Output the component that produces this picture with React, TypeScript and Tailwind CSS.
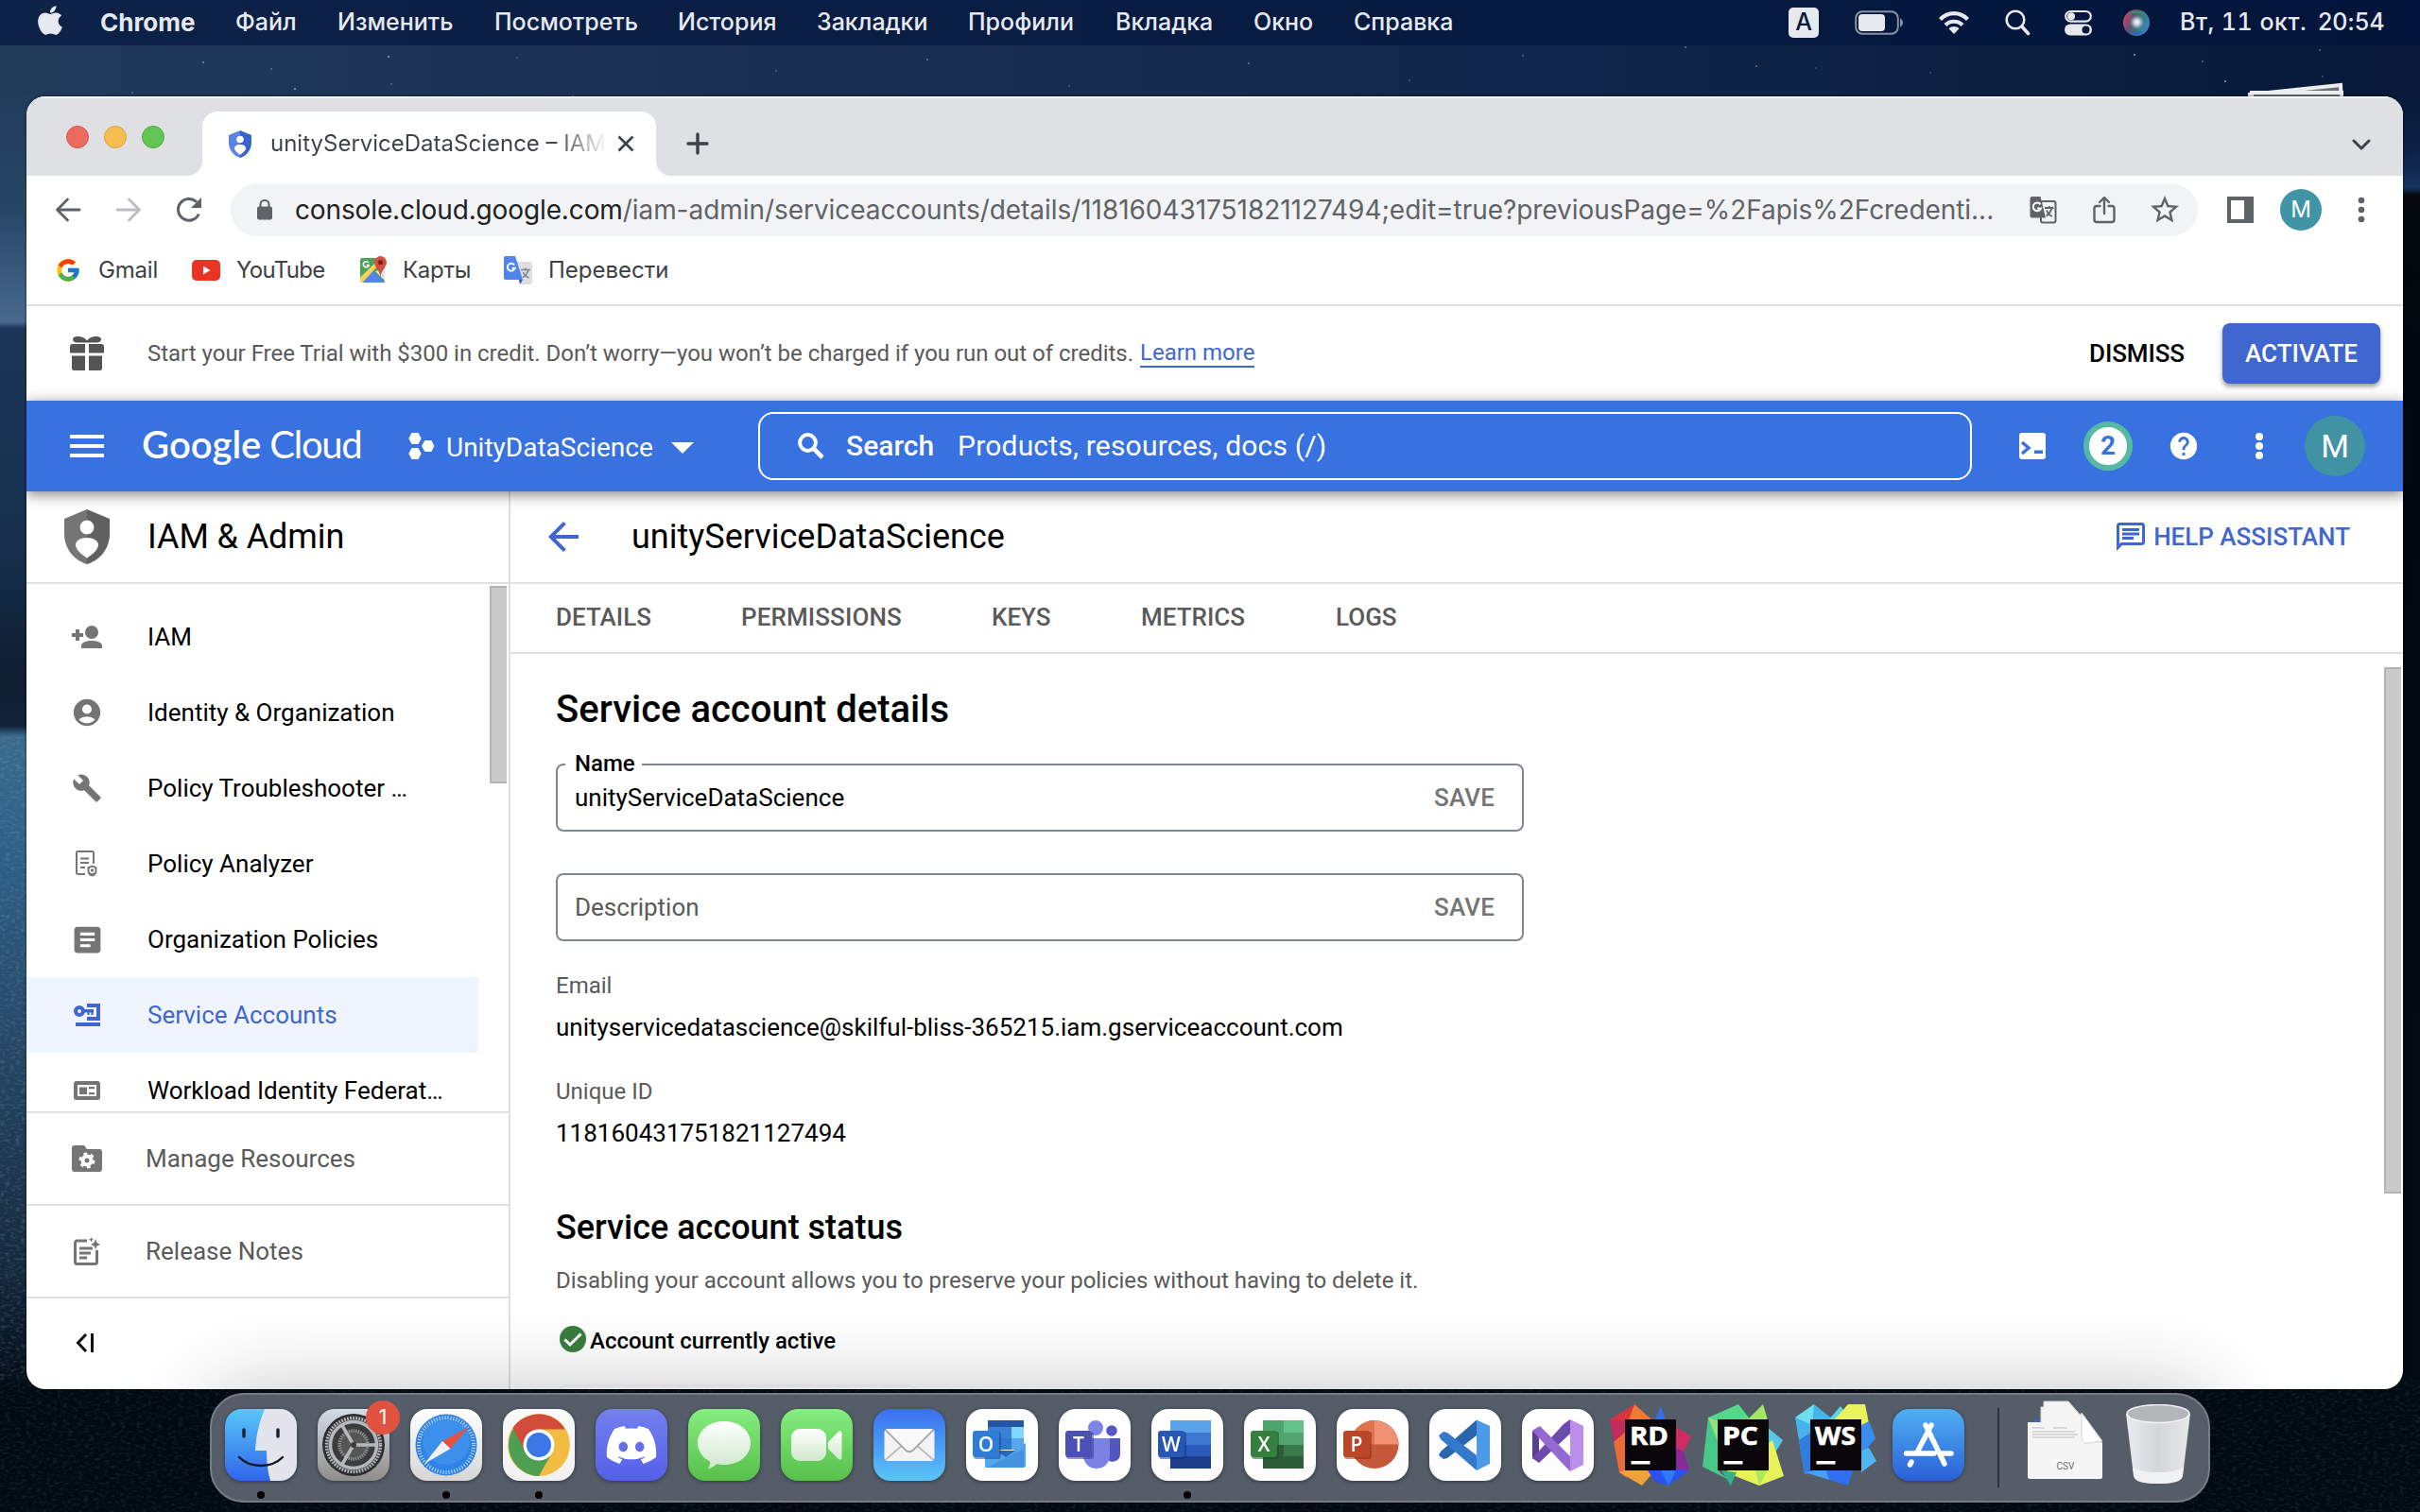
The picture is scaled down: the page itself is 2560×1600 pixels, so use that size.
import type { ReactNode } from "react";
import { FaApple, FaDiscord } from "react-icons/fa";
import { FcGoogle } from "react-icons/fc";
import {
  MdAccountCircle,
  MdArrowBack,
  MdArticle,
  MdBuild,
  MdHelp,
  MdOutlineChat,
  MdStarBorder,
} from "react-icons/md";

/* ---------- desktop ---------- */

const STARS: [number, number, number][] = [
  [214, 65, 0.5], [286, 72, 0.35], [311, 93, 0.6], [410, 59, 0.6], [413, 88, 0.3], [546, 60, 0.25],
  [139, 97, 0.3], [605, 101, 0.4], [1782, 49, 0.4], [1857, 69, 0.4], [1920, 71, 0.2], [2041, 76, 0.2],
  [2257, 57, 0.6], [2329, 64, 0.4], [2353, 85, 0.6], [2453, 52, 0.4], [2456, 80, 0.3], [820, 74, 0.3],
  [980, 62, 0.4], [1130, 90, 0.3], [1320, 66, 0.4], [1490, 84, 0.3], [1610, 58, 0.35],
];

function Wallpaper() {
  return (
    <svg className="absolute inset-0" width="2560" height="1600" viewBox="0 0 2560 1600" aria-hidden>
      <defs>
        <linearGradient id="sky" x1="0" x2="1" y1="0" y2="0">
          <stop offset="0" stopColor="#213b5b" />
          <stop offset="0.3" stopColor="#1b2f52" />
          <stop offset="0.65" stopColor="#11264a" />
          <stop offset="1" stopColor="#071838" />
        </linearGradient>
        <linearGradient id="west" x1="0" x2="0" y1="0" y2="1600" gradientUnits="userSpaceOnUse">
          <stop offset="0" stopColor="#213b5b" />
          <stop offset="0.06" stopColor="#213b5b" />
          <stop offset="0.14" stopColor="#274767" />
          <stop offset="0.213" stopColor="#47698f" />
          <stop offset="0.217" stopColor="#1b3658" />
          <stop offset="0.36" stopColor="#16304e" />
          <stop offset="0.45" stopColor="#0f1d30" />
          <stop offset="0.48" stopColor="#11243a" />
          <stop offset="0.487" stopColor="#3a6b8c" />
          <stop offset="0.56" stopColor="#2f6088" />
          <stop offset="0.68" stopColor="#264a69" />
          <stop offset="0.84" stopColor="#15283c" />
          <stop offset="0.92" stopColor="#020b14" />
          <stop offset="1" stopColor="#020b14" />
        </linearGradient>
        <linearGradient id="east" x1="0" x2="0" y1="0" y2="1600" gradientUnits="userSpaceOnUse">
          <stop offset="0" stopColor="#071838" />
          <stop offset="0.06" stopColor="#071838" />
          <stop offset="0.1" stopColor="#0b2147" />
          <stop offset="0.124" stopColor="#15335c" />
          <stop offset="0.129" stopColor="#05090f" />
          <stop offset="0.24" stopColor="#020812" />
          <stop offset="0.9" stopColor="#020b14" />
          <stop offset="1" stopColor="#020b14" />
        </linearGradient>
        <filter id="grain" x="0" y="0" width="1" height="1">
          <feTurbulence type="fractalNoise" baseFrequency="0.18 0.35" numOctaves="3" seed="4" />
          <feColorMatrix values="0 0 0 0 0.2  0 0 0 0 0.38  0 0 0 0 0.5  0 0 0 1.6 -0.75" />
        </filter>
      </defs>
      <rect width="2560" height="1600" fill="#020b14" />
      <rect width="2560" height="160" fill="url(#sky)" />
      <rect y="100" width="60" height="1500" fill="url(#west)" />
      <rect x="2520" y="100" width="40" height="1500" fill="url(#east)" />
      <rect y="780" width="50" height="680" filter="url(#grain)" opacity="0.45" />
      <rect y="1460" width="2560" height="140" filter="url(#grain)" opacity="0.22" />
      {STARS.map(([x, y, o]) => (
        <rect key={`${x}-${y}`} x={x} y={y} width="2" height="2" fill="#a9c4dd" opacity={o} />
      ))}
      <g fill="#6d7076" stroke="#eceef0" strokeWidth="4">
        <path d="M2380 100 L2476 90 L2478 130 L2380 130Z" />
        <path d="M2382 98 L2477 98 L2477 130 L2382 130Z" />
      </g>
    </svg>
  );
}

/* ---------- menu bar ---------- */

function MenuBar() {
  return (
    <header className="relative flex h-12 items-center bg-[#00123a]/60 pb-[1px] text-[25px] font-medium whitespace-nowrap text-[#e6eaf0]">
      <span className="ml-[38px] w-[68px]">
        <FaApple size={33} className="-mt-1 h-[35px] w-[30px]" />
      </span>
      <span className="w-[143px] text-[26px] font-bold">Chrome</span>
      <span className="w-[108px]">Файл</span>
      <span className="w-[166px]">Изменить</span>
      <span className="w-[194px]">Посмотреть</span>
      <span className="w-[147px]">История</span>
      <span className="w-[160px]">Закладки</span>
      <span className="w-[156px]">Профили</span>
      <span className="w-[146px]">Вкладка</span>
      <span className="w-[106px]">Окно</span>
      <span className="w-[460px]">Справка</span>
      <span className="mr-[38px] flex h-8 w-8 items-center justify-center rounded-[5px] bg-[#e6e9ee] text-[25px] text-[#0a1a3c]">A</span>
      <svg className="mr-[36px]" width="52" height="26" viewBox="0 0 52 26">
        <rect x="1.2" y="1.2" width="44.6" height="23.6" rx="7" fill="none" stroke="#8893a8" strokeWidth="2" />
        <rect x="4" y="4" width="28" height="18" rx="4" fill="#e6e9ee" />
        <path d="M48 8.500c4 1.500 4 7.500 0 9z" fill="#8893a8" />
      </svg>
      <svg className="mr-[37px]" width="34" height="26" viewBox="0 0 34 26" fill="none" stroke="#e6e9ee" strokeWidth="4.200">
        <path d="M2.500 9.500C10.500 1 23.500 1 31.500 9.500" />
        <path d="M8 15.500c5-5 13-5 18 0" />
        <path d="M17 25l-5.500-5.700c3-3 8-3 11 0z" fill="#e6e9ee" stroke="none" />
      </svg>
      <svg className="mr-[36px]" width="27" height="28" viewBox="0 0 27 28" fill="none" stroke="#e6e9ee" strokeLinecap="round">
        <circle cx="11" cy="11" r="9.300" strokeWidth="2.600" />
        <path d="M17.800 18l6.700 7.500" strokeWidth="3.600" />
      </svg>
      <svg className="mr-[33px]" width="29" height="28" viewBox="0 0 29 28">
        <rect x="1.200" y="2" width="26.600" height="10.600" rx="5.300" fill="none" stroke="#e6e9ee" strokeWidth="2.200" />
        <circle cx="7" cy="7.300" r="4" fill="#e6e9ee" />
        <rect y="15.500" width="29" height="12" rx="6" fill="#e6e9ee" />
        <circle cx="22.500" cy="21.500" r="4" fill="#0a1a3c" />
      </svg>
      <svg className="mr-[32px]" width="28" height="28" viewBox="0 0 28 28">
        <defs>
          <linearGradient id="siri" x1="0" x2="1" y1="0.300" y2="0.700">
            <stop offset="0" stopColor="#c8446c" />
            <stop offset="0.350" stopColor="#5b5470" />
            <stop offset="0.650" stopColor="#347f86" />
            <stop offset="1" stopColor="#3f7fd0" />
          </linearGradient>
          <radialGradient id="siriGlow">
            <stop offset="0" stopColor="#fff" />
            <stop offset="0.400" stopColor="#e9e6f5" stopOpacity="0.800" />
            <stop offset="1" stopColor="#8ab" stopOpacity="0" />
          </radialGradient>
        </defs>
        <circle cx="14" cy="14" r="14" fill="url(#siri)" />
        <path d="M5 5c6-5 14-4 18 1-5-2-12-2-18-1z" fill="#2f9a6a" opacity="0.800" />
        <path d="M6 23c5 5 12 4 16 0-5 1-11 1-16 0z" fill="#2f62c0" opacity="0.900" />
        <circle cx="14.500" cy="13.500" r="8" fill="url(#siriGlow)" />
      </svg>
      <span className="w-[146px] tracking-[0.500px] tabular-nums">Вт, 11 окт.</span>
      <span className="tracking-[-0.100px]">20:54</span>
    </header>
  );
}

/* ---------- browser chrome ---------- */

function Shield({ className, a, b }: { className: string; a: string; b: string }) {
  return (
    <svg className={className} viewBox="0 0 48 58">
      <path d="M24 0L0 10v16c0 15 10 28 24 32z" fill={a} />
      <path d="M24 0l24 10v16c0 15-10 28-24 32z" fill={b} />
      <circle cx="24" cy="19" r="7.500" fill="#fff" />
      <path d="M24 30c6.500 0 12 3 12 7.500 0 5-6 10-12 14-6-4-12-9-12-14C12 33 17.500 30 24 30z" fill="#fff" />
    </svg>
  );
}

function TabStrip() {
  return (
    <div className="flex h-[84px] shrink-0 items-end bg-[#dee0e4] shadow-[inset_0_2px_0_#f4f5f6]">
      <div className="mb-[29px] ml-[42px] flex gap-4">
        <i className="size-6 rounded-full border border-[#d3564b] bg-[#ed6a5e]" />
        <i className="size-6 rounded-full border border-[#d9a33c] bg-[#f5be4e]" />
        <i className="size-6 rounded-full border border-[#52a840] bg-[#61c654]" />
      </div>
      <svg className="ml-6" width="16" height="16" viewBox="0 0 16 16">
        <path d="M16 0v16H0C9 16 16 9 16 0z" fill="#fff" />
      </svg>
      <div className="flex h-[68px] w-[480px] items-center rounded-t-2xl bg-white pl-7">
        <Shield className="h-[29px] w-6" a="#5a84e0" b="#3a64cc" />
        <span className="ml-5 w-[356px] overflow-hidden bg-linear-to-r from-[#3d4145] from-85% to-transparent to-[100%] bg-clip-text text-2xl whitespace-nowrap text-transparent">
          unityServiceDataScience – IAM
        </span>
        <svg className="ml-[11px]" width="18" height="18" viewBox="0 0 18 18" stroke="#3d4145" strokeWidth="2.600">
          <path d="M1.500 1.500l15 15M16.500 1.500l-15 15" />
        </svg>
      </div>
      <svg width="16" height="16" viewBox="0 0 16 16">
        <path d="M0 0v16h16C7 16 0 9 0 0z" fill="#fff" />
      </svg>
      <svg className="mb-[22px] ml-4" width="24" height="24" viewBox="0 0 24 24" stroke="#3d4145" strokeWidth="3.400" strokeLinecap="round">
        <path d="M12 2v20M2 12h20" />
      </svg>
      <svg className="mr-[34px] mb-[26px] ml-auto" width="20" height="14" viewBox="0 0 20 14" fill="none" stroke="#3d4145" strokeWidth="3" strokeLinecap="round" strokeLinejoin="round">
        <path d="M2 3l8 8 8-8" />
      </svg>
    </div>
  );
}

function Toolbar() {
  return (
    <div className="flex h-[72px] shrink-0 items-center text-[#5f6368]">
      <svg className="ml-[30px]" width="28" height="28" viewBox="0 0 28 28" fill="none" stroke="#5f6368" strokeWidth="2.800" strokeLinecap="round" strokeLinejoin="round">
        <path d="M26 14H3M13.500 3L2.500 14l11 11" />
      </svg>
      <svg className="ml-9" width="28" height="28" viewBox="0 0 28 28" fill="none" stroke="#bcbec1" strokeWidth="2.800" strokeLinecap="round" strokeLinejoin="round">
        <path d="M2 14h23M14.500 3l11 11-11 11" />
      </svg>
      <svg className="ml-9" width="28" height="28" viewBox="0 0 28 28">
        <path d="M24.300 18.500A11.400 11.400 0 1 1 22 5.800" fill="none" stroke="#5f6368" strokeWidth="3" />
        <path d="M27 1v11H16z" fill="#5f6368" />
      </svg>
      <div className="ml-[30px] flex h-14 w-[2081px] items-center rounded-full bg-[#f1f3f4]">
        <svg className="ml-7" width="16" height="22" viewBox="0 0 16 22">
          <path d="M3.500 8V5.500a4.500 4.500 0 0 1 9 0V8" fill="none" stroke="#5f6368" strokeWidth="2.200" />
          <rect y="7.500" width="16" height="14" rx="2" fill="#5f6368" />
        </svg>
        <span className="ml-6 w-[1823px] text-[28px] tracking-[-0.050px] whitespace-nowrap text-[#5f6368]">
          <span className="tracking-[-0.130px] text-[#202124]">console.cloud.google.com</span>
          /iam-admin/serviceaccounts/details/118160431751821127494;edit=true?previousPage=%2Fapis%2Fcredenti...
        </span>
        <svg className="ml-3" width="30" height="30" viewBox="0 0 30 30">
          <rect x="12" y="6" width="15.500" height="22.500" rx="2" fill="none" stroke="#5f6368" strokeWidth="2" />
          <path d="M2.500 1H11.500l5.500 22.500H2.500A2 2 0 0 1 .5 21.500V3a2 2 0 0 1 2-2z" fill="#5f6368" />
          <path d="M11.500 9.300A4.300 4.300 0 1 0 12 13.500H8" fill="none" stroke="#fff" strokeWidth="2" />
          <path d="M16 13h9.500M20.800 11v2M23.500 13c-1 4-3.500 7-6 8.500M18 15.500c1 3 3.500 5.500 6 6.500" fill="none" stroke="#5f6368" strokeWidth="1.800" />
        </svg>
        <svg className="ml-[37px]" width="24" height="30" viewBox="0 0 24 30" fill="none" stroke="#5f6368" strokeWidth="2.400" strokeLinecap="round" strokeLinejoin="round">
          <path d="M7.500 11H4a2.500 2.500 0 0 0-2.500 2.500v12A2.500 2.500 0 0 0 4 28h16a2.500 2.500 0 0 0 2.500-2.500v-12A2.500 2.500 0 0 0 20 11h-3.500M12 19V2.500M7 7l5-5 5 5" />
        </svg>
        <MdStarBorder className="ml-[34px]" size={36} />
      </div>
      <svg className="ml-[31px]" width="28" height="28" viewBox="0 0 28 28">
        <rect width="28" height="28" fill="#5f6368" />
        <rect x="4" y="4" width="14" height="20" fill="#fff" />
      </svg>
      <span className="ml-7 flex size-11 items-center justify-center rounded-full bg-[#4194a3] text-2xl text-white">M</span>
      <svg className="ml-[38px]" width="8" height="28" viewBox="0 0 8 28" fill="#5f6368">
        <circle cx="4" cy="4" r="3.300" />
        <circle cx="4" cy="14" r="3.300" />
        <circle cx="4" cy="24" r="3.300" />
      </svg>
    </div>
  );
}

function Bookmarks() {
  return (
    <div className="flex h-[66px] shrink-0 items-center border-b-2 border-[#dfe0e1] pb-[9px] text-2xl tracking-[-0.200px] whitespace-nowrap text-[#3d4145]">
      <FcGoogle className="ml-[30px]" size={28} />
      <span className="ml-[18px] w-[99px]">Gmail</span>
      <svg width="30" height="22" viewBox="0 0 30 22">
        <rect width="30" height="22" rx="5" fill="#e93323" />
        <path d="M12 6.500v9l7.500-4.500z" fill="#fff" />
      </svg>
      <span className="ml-[17px] w-[131px] tracking-[-0.700px]">YouTube</span>
      <svg width="30" height="30" viewBox="0 0 30 30">
        <rect y="2" width="26" height="26" rx="2.500" fill="#4ba35a" />
        <path d="M0 28L13 15l13 13z" fill="#4f86ec" />
        <path d="M0 22.500L17 6l3 3L2.500 28H0z" fill="#f6d35b" />
        <path d="M16 16l10 10V13z" fill="#dfe3e8" />
        <path d="M21.500 0a6.500 6.500 0 0 1 6.500 6.500c0 5-5 7-6.500 15.500C20 13.500 15 11.500 15 6.500A6.500 6.500 0 0 1 21.500 0z" fill="#d2503f" />
        <circle cx="21.500" cy="6.800" r="2.500" fill="#7a2018" />
        <path d="M8.800 7A3 3 0 1 0 9.200 9.600H6.800" fill="none" stroke="#fff" strokeWidth="1.600" />
      </svg>
      <span className="ml-[15px] w-[107px] tracking-[-0.300px]">Карты</span>
      <svg width="30" height="30" viewBox="0 0 30 30">
        <path d="M12 6h16a2 2 0 0 1 2 2v20a2 2 0 0 1-2 2H18z" fill="#dcdee1" />
        <path d="M2 0h10l8 25H2a2 2 0 0 1-2-2V2a2 2 0 0 1 2-2z" fill="#4f84ee" />
        <path d="M16 25h4l-3 5z" fill="#3a4fc0" />
        <path d="M11.200 9.500A4 4 0 1 0 11.700 12.800H8.500" fill="none" stroke="#fff" strokeWidth="1.900" />
        <path d="M18 14.500h10M23 12.500v2M26 14.500c-1 4-3.500 6.500-6 8M20.500 17c1 3 3.500 5 6 6" fill="none" stroke="#7a8794" strokeWidth="1.600" />
      </svg>
      <span className="ml-[17px] tracking-normal">Перевести</span>
    </div>
  );
}

/* ---------- cloud console ---------- */

function PromoBar() {
  return (
    <div className="flex h-[100px] shrink-0 items-center font-[Roboto] text-2xl whitespace-nowrap text-[#5a5a5a]">
      <svg className="ml-[46px]" width="36" height="36" viewBox="0 0 36 36" fill="#555">
        <path d="M18 4.500C15-1 3-1.500 3 3c0 3 3 3.500 7 3.500h16c4 0 7-.5 7-3.500 0-4.500-12-4-15 1.500z" />
        <path d="M3 8h13v9.500H0V11a3 3 0 0 1 3-3zM20 8h13a3 3 0 0 1 3 3v6.500H20zM2 20.500h14V36H4a2 2 0 0 1-2-2zM20 20.500h14V34a2 2 0 0 1-2 2H20z" />
      </svg>
      <span className="ml-[46px] w-[1050px] tracking-[-0.020px]">
        Start your Free Trial with $300 in credit. Don’t worry—you won’t be charged if you run out of credits.
      </span>
      <a className="border-b-2 border-[#4068d2] leading-[28px] text-[#4068d2]">Learn more</a>
      <span className="mr-10 ml-auto text-[26px] font-medium tracking-[-0.100px] text-black">DISMISS</span>
      <button className="mr-6 h-16 w-[167px] rounded-lg bg-[#4066cf] text-[26px] font-medium text-white shadow-[0_3px_5px_rgba(0,0,0,0.4)]">
        ACTIVATE
      </button>
    </div>
  );
}

function CloudHeader() {
  return (
    <div className="relative z-10 flex h-24 shrink-0 items-center bg-[#3871e0] font-[Roboto] whitespace-nowrap text-white shadow-[0_3px_14px_rgba(0,0,0,0.5)]">
      <div className="ml-[46px] flex w-9 flex-col gap-[6px]">
        <i className="h-1 bg-white" />
        <i className="h-1 bg-white" />
        <i className="h-1 bg-white" />
      </div>
      <span className="ml-10 w-[282px] pb-1 font-[Lato] text-[40px] leading-none">
        <span className="font-semibold">Google</span>
        <span className="ml-[9px] tracking-[-1.300px]">Cloud</span>
      </span>
      <svg width="28" height="28" viewBox="0 0 28 28" fill="#fff">
        <path d="M3.500 0h7l3.200 6-3.200 6h-7L.3 6zM17.300 8h7l3.200 6-3.200 6h-7l-3.200-6zM3.500 16h7l3.200 6-3.200 6h-7L.3 22z" />
      </svg>
      <span className="ml-3 w-[238px] pt-1 text-[28px]">UnityDataScience</span>
      <svg className="mt-1" width="24" height="12" viewBox="0 0 24 12" fill="#fff">
        <path d="M0 0h24L12 12z" />
      </svg>
      <div className="ml-[68px] flex h-[72px] w-[1284px] items-center rounded-2xl border-2 border-white text-[30px] tracking-[0.200px]">
        <svg className="ml-10" width="28" height="28" viewBox="0 0 28 28" fill="none" stroke="#fff">
          <circle cx="10.500" cy="10.500" r="8.400" strokeWidth="4" />
          <path d="M16.500 16.500l9.500 9.500" strokeWidth="4.600" />
        </svg>
        <span className="ml-[23px] w-[118px] pb-[1px] font-medium tracking-[0]">Search</span>
        <span className="pb-[1px]">Products, resources, docs (/)</span>
      </div>
      <svg className="ml-[50px]" width="28" height="28" viewBox="0 0 28 28">
        <rect width="28" height="28" rx="3" fill="#fff" />
        <path d="M3 10l7 6-7 6" fill="none" stroke="#3871e0" strokeWidth="3.400" />
        <rect x="16" y="18.500" width="9" height="3.500" fill="#3871e0" />
      </svg>
      <span className="ml-10 flex size-[52px] items-center justify-center rounded-full border-[6px] border-[#56b9a4] bg-white text-[28px] font-bold text-[#3871e0]">
        2
      </span>
      <MdHelp className="ml-[37px]" size={34} />
      <svg className="ml-[59px]" width="8" height="28" viewBox="0 0 8 28" fill="#fff">
        <circle cx="4" cy="4" r="4" />
        <circle cx="4" cy="14" r="4" />
        <circle cx="4" cy="24" r="4" />
      </svg>
      <span className="ml-[44px] flex size-16 items-center justify-center rounded-full bg-[#4193a3] text-[34px]">M</span>
    </div>
  );
}

const PersonAddIcon = (
  <svg width="32" height="24" viewBox="0 0 32 24" fill="#757575">
    <path d="M4 4h4v4h4v4H8v4H4v-4H0V8h4z" />
    <circle cx="21" cy="7" r="7" />
    <path d="M10 24v-2.500c0-4 6-5.500 11-5.500s11 1.500 11 5.500V24z" />
  </svg>
);
const PolicyAnalyzerIcon = (
  <svg width="24" height="28" viewBox="0 0 24 28" fill="none" stroke="#757575" strokeWidth="2">
    <path d="M10 25H2.500A1.500 1.500 0 0 1 1 23.500v-21A1.500 1.500 0 0 1 2.500 1h15A1.500 1.500 0 0 1 19 2.500V14M5 8.500h9M5 13h9M5 18h5" />
    <path d="M17.500 15.500l5 2v4c0 3-2 5.500-5 6-3-.5-5-3-5-6v-4z" fill="#757575" stroke="none" />
    <circle cx="17.500" cy="21" r="2.400" stroke="#fff" strokeWidth="1.500" />
  </svg>
);
const KeyIcon = (
  <svg width="28" height="24" viewBox="0 0 28 24" fill="none" stroke="#4066cf">
    <circle cx="6" cy="8" r="4" strokeWidth="4" />
    <path d="M14 2h12v14H14" strokeWidth="4" />
    <path d="M10 7.700h11" strokeWidth="3.400" />
    <path d="M15.500 8v4M19.500 8v4" strokeWidth="2.200" />
    <path d="M2 22h26" strokeWidth="4" />
  </svg>
);
const WorkloadIcon = (
  <svg width="28" height="20" viewBox="0 0 28 20">
    <rect width="28" height="20" rx="3" fill="#757575" />
    <rect x="4" y="4" width="20" height="12" fill="#fff" />
    <path d="M6 6.500h8v7.500H6zM16 6h6v2.200h-6zM16 12h6v2.200h-6z" fill="#757575" />
  </svg>
);

const NAV: { label: string; icon: ReactNode; active?: boolean }[] = [
  { label: "IAM", icon: PersonAddIcon },
  { label: "Identity & Organization", icon: <MdAccountCircle size={34} /> },
  { label: "Policy Troubleshooter …", icon: <MdBuild size={32} /> },
  { label: "Policy Analyzer", icon: PolicyAnalyzerIcon },
  { label: "Organization Policies", icon: <MdArticle size={37} /> },
  { label: "Service Accounts", icon: KeyIcon, active: true },
  { label: "Workload Identity Federat…", icon: WorkloadIcon },
];

function Sidebar() {
  return (
    <aside className="flex w-[512px] shrink-0 flex-col border-r-2 border-[#e0e0e0]">
      <div className="flex h-[98px] shrink-0 items-center border-b-2 border-[#e0e0e0] text-4xl tracking-[-0.100px] text-black">
        <Shield className="mr-10 ml-10 h-[58px] w-12" a="#757575" b="#616161" />
        IAM &amp; Admin
      </div>
      <div className="flex h-[558px] shrink-0">
        <ul className="w-[490px] overflow-hidden pt-4 pr-3 text-[26px] whitespace-nowrap text-black">
          {NAV.map((n) => (
            <li key={n.label} className={n.active ? "flex h-20 items-center bg-[#f0f4fe] text-[#4066cf]" : "flex h-20 items-center"}>
              <span className="mr-10 ml-10 flex w-12 justify-center text-[#757575]">{n.icon}</span>
              <span>{n.label}</span>
            </li>
          ))}
        </ul>
        <div className="mt-[2px] h-[209px] w-[18px] border-y-2 border-l-2 border-[#b4b4b4] bg-[#cacaca]" />
      </div>
      <div className="flex h-[98px] shrink-0 items-center border-t-2 border-[#e0e0e0] text-[26px] text-[#5a5a5a]">
        <svg className="ml-12" width="32" height="28" viewBox="0 0 32 28">
          <path d="M3 0h10l3 4h13a3 3 0 0 1 3 3v18a3 3 0 0 1-3 3H3a3 3 0 0 1-3-3V3a3 3 0 0 1 3-3z" fill="#757575" />
          <circle cx="16" cy="16" r="4.500" fill="none" stroke="#fff" strokeWidth="4" />
          <circle cx="16" cy="16" r="7" fill="none" stroke="#fff" strokeWidth="3" strokeDasharray="3.660 3.660" />
        </svg>
        <span className="ml-[46px]">Manage Resources</span>
      </div>
      <div className="flex h-[100px] shrink-0 items-center border-y-2 border-[#e0e0e0] text-[26px] text-[#5a5a5a]">
        <svg className="ml-[50px]" width="28" height="30" viewBox="0 0 28 30" fill="none" stroke="#757575">
          <path d="M14 4H3.500A2 2 0 0 0 1.500 6v20.500a2 2 0 0 0 2 2h19a2 2 0 0 0 2-2V14" strokeWidth="3" />
          <path d="M6 12h14M6 17h12M6 22h8" strokeWidth="2.800" />
          <path d="M23 2l1.500 4L28 8l-3.500 1.500L23 13l-1.500-3.500L18 8l3.500-2zM18.500 0l.8 2 2 .8-2 .8-.8 2-.8-2-2-.8 2-.8z" fill="#757575" stroke="none" />
        </svg>
        <span className="ml-12">Release Notes</span>
      </div>
      <svg className="mt-[37px] ml-[52px]" width="20" height="20" viewBox="0 0 20 20" fill="none" stroke="#111" strokeWidth="3">
        <path d="M11 1L2.500 10 11 19M17.500 0v20" />
      </svg>
    </aside>
  );
}

const Save = () => <span className="font-medium tracking-[0.150px] text-[#757575]">SAVE</span>;

function Main() {
  return (
    <main className="flex min-w-0 flex-1 flex-col whitespace-nowrap">
      <div className="flex h-[98px] shrink-0 items-center border-b-2 border-[#e0e0e0] text-black">
        <MdArrowBack className="ml-[32px] text-[#4066cf]" size={48} />
        <span className="ml-12 text-4xl">unityServiceDataScience</span>
        <MdOutlineChat className="ml-auto text-[#4066cf]" size={36} />
        <span className="mr-[56px] ml-[6px] text-[26px] font-medium text-[#4066cf]">HELP ASSISTANT</span>
      </div>
      <nav className="flex h-[74px] shrink-0 items-center border-b-2 border-[#e0e0e0] pb-[2px] pl-12 text-[26px] font-medium text-[#5a5a5a]">
        <span className="w-[196px]">DETAILS</span>
        <span className="w-[265px] tracking-[0.100px]">PERMISSIONS</span>
        <span className="w-[158px]">KEYS</span>
        <span className="w-[206px]">METRICS</span>
        <span>LOGS</span>
      </nav>
      <div className="flex justify-between pl-12">
        <section className="flex w-[1024px] flex-col text-[26px] leading-8 text-black">
          <h1 className="mt-[35px] text-[40px] leading-[48px] font-medium">Service account details</h1>
          <div className="relative mt-[33px] flex h-[72px] items-center justify-between rounded-lg border-2 border-[#80868b] pr-[29px] pl-[18px]">
            <span className="absolute -top-5 left-2 bg-white pr-[7px] pl-[10px] text-2xl leading-9 font-medium">Name</span>
            unityServiceDataScience
            <Save />
          </div>
          <div className="mt-11 flex h-[72px] items-center justify-between rounded-lg border-2 border-[#80868b] pr-[29px] pl-[18px] text-[#5a5a5a]">
            Description
            <Save />
          </div>
          <span className="mt-[31px] text-2xl leading-8 text-[#5a5a5a]">Email</span>
          <span className="mt-3">unityservicedatascience@skilful-bliss-365215.iam.gserviceaccount.com</span>
          <span className="mt-9 text-2xl leading-8 text-[#5a5a5a]">Unique ID</span>
          <span className="mt-3">118160431751821127494</span>
          <h2 className="mt-[62px] text-4xl leading-[44px] font-medium">Service account status</h2>
          <span className="mt-[18px] text-2xl leading-8 tracking-[-0.020px] text-[#5a5a5a]">
            Disabling your account allows you to preserve your policies without having to delete it.
          </span>
          <span className="mt-8 flex items-center text-2xl leading-8 font-medium">
            <svg className="mr-1 mb-1 ml-1" width="28" height="28" viewBox="0 0 28 28">
              <circle cx="14" cy="14" r="14" fill="#3a7d3e" />
              <path d="M5.500 14.500l5.500 5.500L22.500 8.500" fill="none" stroke="#fff" strokeWidth="3" />
            </svg>
            Account currently active
          </span>
          <div className="mt-8 ml-1 h-10 w-[376px] shrink-0 rounded-md bg-white shadow-[0_0_3px_rgba(0,0,0,0.15)]" />
        </section>
        <div className="mt-[14px] mr-[2px] h-[557px] w-[18px] border-y-2 border-l-2 border-[#b4b4b4] bg-[#cacaca]" />
      </div>
    </main>
  );
}

/* ---------- dock ---------- */

function Tile({ children, id, from, to }: { children?: ReactNode; id: string; from: string; to: string }) {
  return (
    <svg width="76" height="76" viewBox="0 0 76 76" className="overflow-visible drop-shadow-[0_1px_2px_rgba(0,0,0,0.4)]">
      <defs>
        <linearGradient id={id} x1="0" x2="0" y1="0" y2="1">
          <stop offset="0" stopColor={from} />
          <stop offset="1" stopColor={to} />
        </linearGradient>
        <clipPath id={`${id}-clip`}>
          <rect width="76" height="76" rx="18" />
        </clipPath>
      </defs>
      <rect width="76" height="76" rx="18" fill={`url(#${id})`} />
      <g clipPath={`url(#${id}-clip)`}>{children}</g>
    </svg>
  );
}

const Finder = (
  <Tile id="finder" from="#58c7fa" to="#2f65ea">
    <path d="M42 0C36 14 33 28 32 44h12c0 12 1 22 4 32h28V0z" fill="#e2e5ee" />
    <path d="M20 22v7M56 22v7" stroke="#1b2430" strokeWidth="3.500" strokeLinecap="round" />
    <path d="M15 51c12 12 34 12 46 0" fill="none" stroke="#10161f" strokeWidth="2.400" strokeLinecap="round" />
  </Tile>
);
const Settings = (
  <Tile id="settings" from="#d3dde6" to="#8f8d8a">
    <circle cx="38" cy="38" r="33" fill="#2b2c2e" />
    <circle cx="38" cy="38" r="28.500" fill="#4b4c4e" stroke="#b9bdc1" strokeWidth="3.500" strokeDasharray="1.700 1.400" />
    <circle cx="38" cy="38" r="24.500" fill="#3a3b3d" stroke="#b5b9bd" strokeWidth="3.500" />
    <circle cx="38" cy="38" r="15" fill="#575655" stroke="#8d8f91" strokeWidth="3.500" strokeDasharray="1.500 1" />
    <path d="M38 38h24M38 38L26 17.500M38 38L26 58.500" stroke="#b5b9bd" strokeWidth="3.500" />
    <circle cx="38" cy="38" r="3" fill="#3b3c3d" />
  </Tile>
);
const Safari = (
  <Tile id="safari" from="#ffffff" to="#d6d6d6">
    <circle cx="38" cy="38" r="32.500" fill="#2f82e6" />
    <circle cx="38" cy="34" r="25" fill="#4a9df0" opacity="0.500" />
    <circle cx="38" cy="38" r="29" fill="none" stroke="#d8e9fb" strokeWidth="4" strokeDasharray="0.900 2.100" />
    <path d="M62 19L42.500 42 34 34z" fill="#e8503f" />
    <path d="M15 58L34 34l8.500 8z" fill="#f2f2f2" />
  </Tile>
);
const Chrome = (
  <Tile id="chrome" from="#fafafa" to="#f1f1f1">
    <circle cx="38" cy="38" r="33" fill="#f2bb41" />
    <path d="M38 38L10.500 21.500A33 33 0 0 0 38 71l14-25z" fill="#4d9f52" />
    <path d="M38 21.500h28A33 33 0 0 0 10.500 20L24 46z" fill="#d34c3b" />
    <circle cx="38" cy="38" r="16.500" fill="#fff" />
    <circle cx="38" cy="38" r="13" fill="#3b78e7" />
  </Tile>
);
const Discord = (
  <Tile id="discord" from="#7480ee" to="#5460e8">
    <g transform="translate(9.500 9.500)" color="#fff">
      <FaDiscord size={57} />
    </g>
  </Tile>
);
const Messages = (
  <Tile id="messages" from="#86ee80" to="#56c04a">
    <defs>
      <linearGradient id="bubble" x1="0" x2="0" y1="0" y2="1">
        <stop offset="0" stopColor="#fff" />
        <stop offset="1" stopColor="#cfe8cb" />
      </linearGradient>
    </defs>
    <path d="M38 13c16 0 28 10 28 23S54 59 38 59c-3 0-5.500-.3-8-1-2 2.500-6 5-9 5 1.500-2 2.500-4.500 2-7.500C15 51.500 10 44 10 36c0-13 12-23 28-23z" fill="url(#bubble)" />
  </Tile>
);
const FaceTime = (
  <Tile id="facetime" from="#86ee80" to="#56c04a">
    <rect x="11" y="21" width="37" height="34" rx="9" fill="url(#bubble)" />
    <path d="M50 35l11-11c1.500-1.500 3.500-.5 3.500 1.500v26c0 2-2 3-3.500 1.500L50 42z" fill="url(#bubble)" />
  </Tile>
);
const Mail = (
  <Tile id="mail" from="#3a6ff0" to="#5bc5f8">
    <rect x="11.500" y="21" width="53" height="34" rx="4" fill="#f3f3f3" />
    <path d="M12.500 54L32 37M63.500 54L44 37" stroke="#bdbdbd" strokeWidth="1.800" />
    <path d="M12.500 22l21 21c3 3 6 3 9 0l21-21" fill="#f9f9f9" stroke="#a9a9a9" strokeWidth="1.800" />
  </Tile>
);

function Badge({ letter, fill, edge }: { letter: string; fill: string; edge: string }) {
  return (
    <>
      <rect x="8" y="24" width="29" height="29" rx="3" fill={edge} opacity="0.500" />
      <rect x="7" y="23" width="28" height="28" rx="3" fill={fill} />
      <text x="21" y="44.500" textAnchor="middle" fill="#fff" className="font-[Open_Sans] text-[21px] font-semibold">
        {letter}
      </text>
    </>
  );
}

const Outlook = (
  <Tile id="outlook" from="#ffffff" to="#fdfdfd">
    <rect x="23" y="12" width="38" height="22" fill="#2456a5" />
    <path d="M23 19h12v12H23zM35 19h13v12H35zM48 19h13v12H48z" fill="#3c80d8" />
    <path d="M48 19h13v12H48z" fill="#7dd6fb" />
    <path d="M35 31h13v12H35z" fill="#3277cf" />
    <path d="M48 31h13v12H48z" fill="#58a5ea" />
    <path d="M20 36l22 13 21-13v24a2 2 0 0 1-2 2H20z" fill="#54a7ea" />
    <path d="M22 62l39-20v20z" fill="#3f8adb" opacity="0.700" />
    <path d="M32 44h20L42 51z" fill="#2a64b8" />
    <Badge letter="O" fill="#2e7cd6" edge="#1a3f80" />
  </Tile>
);
const Teams = (
  <Tile id="teams" from="#ffffff" to="#fdfdfd">
    <circle cx="39" cy="20" r="8" fill="#7f85e6" />
    <circle cx="56" cy="23" r="5.800" fill="#5558c4" />
    <path d="M50 31h15v17a8 8 0 0 1-13 6z" fill="#5257c0" />
    <path d="M26 31h28v18c0 8-6 14-14 14s-14-6-14-14z" fill="#7c82e4" />
    <Badge letter="T" fill="#4b50b6" edge="#2d3080" />
  </Tile>
);
const Word = (
  <Tile id="word" from="#ffffff" to="#fdfdfd">
    <rect x="20" y="12" width="43" height="13" fill="#5aa2ea" />
    <rect x="20" y="25" width="43" height="13" fill="#3f78cf" />
    <rect x="20" y="38" width="43" height="12" fill="#2b5abc" />
    <rect x="20" y="50" width="43" height="13" fill="#1d3d8a" />
    <Badge letter="W" fill="#2756b4" edge="#13306f" />
  </Tile>
);
const Excel = (
  <Tile id="excel" from="#ffffff" to="#fdfdfd">
    <rect x="20" y="12" width="22" height="26" fill="#4da56b" />
    <rect x="42" y="12" width="21" height="13" fill="#63c286" />
    <rect x="42" y="25" width="21" height="13" fill="#4fa56c" />
    <rect x="20" y="38" width="43" height="25" fill="#2c5c38" />
    <rect x="42" y="38" width="21" height="12" fill="#397a49" />
    <Badge letter="X" fill="#35803f" edge="#1a4a26" />
  </Tile>
);
const PowerPoint = (
  <Tile id="ppt" from="#ffffff" to="#fdfdfd">
    <circle cx="40" cy="37.500" r="25.500" fill="#c5583a" />
    <path d="M40 12a25.500 25.500 0 0 1 25.500 25.500H40z" fill="#ef9274" />
    <path d="M40 12a25.500 25.500 0 0 0-25.500 25.500H40z" fill="#de7350" />
    <Badge letter="P" fill="#bb4527" edge="#7a2814" />
  </Tile>
);
const VsCode = (
  <Tile id="vscode" from="#ffffff" to="#fdfdfd">
    <path d="M50 11.500L12 45l-2 4 5 4 4-1 31-24z" fill="#2a66ac" />
    <path d="M50 65L12 32l-2-4 5-4 4 1 31 24z" fill="#3579cb" />
    <path d="M50 11.500L64 18v40L50 65z" fill="#4b9be8" />
  </Tile>
);
const VisualStudio = (
  <Tile id="vs" from="#ffffff" to="#fdfdfd">
    <path d="M11 23l7-4v37l-7-4z" fill="#5a3d94" />
    <path d="M18 57l-7-5 33-36 7-5v15z" fill="#6c4aae" />
    <path d="M11 23l8-5 32 32v16L45 60z" fill="#9569d2" />
    <path d="M51 11l14 7v41l-14 7z" fill="#bb8dec" />
  </Tile>
);
const AppStore = (
  <Tile id="appstore" from="#4fb0f3" to="#2b5fd8">
    <g stroke="#fff" strokeWidth="5.500" strokeLinecap="round" fill="none">
      <path d="M41 17L27 44M35 17l20 41M14.500 47H44M53 47h9M20 56l-1.500 3" />
    </g>
  </Tile>
);

function JetBrains({ code, shapes }: { code: string; shapes: [string, string][] }) {
  return (
    <svg width="86" height="86" viewBox="0 0 86 86" className="-my-[5px]">
      {shapes.map(([d, c]) => (
        <path key={d} d={d} fill={c} />
      ))}
      <rect x="16" y="16" width="54" height="54" fill="#0b0609" />
      <rect x="22.500" y="60" width="20" height="3.500" fill="#fff" />
      <text
        x="21"
        y="42.500"
        fill="#fff"
        stroke="#fff"
        strokeWidth="0.600"
        className="font-[Open_Sans] text-[27px] font-bold"
        textLength={code === "WS" ? 43 : code === "PC" ? 38 : 41}
        lengthAdjust="spacingAndGlyphs"
      >
        {code}
      </text>
    </svg>
  );
}

const Rider = (
  <JetBrains
    code="RD"
    shapes={[
      ["M0 16L26 0l20 18-28 52-8-4z", "#d8343f"],
      ["M0 16l18 2-8 48z", "#c42a5c"],
      ["M26 0l20 18-28 4z", "#ee7a35"],
      ["M4 40l14-12v50L10 72z", "#ea6a3a"],
      ["M54 2l10 30H40z", "#3a6de8"],
      ["M70 24l16 10-8 16-8 2z", "#d22a66"],
      ["M70 46l8 4 6 20-14 4z", "#8a2a9a"],
      ["M10 72l20-8 16 8-12 14z", "#f0a13a"],
      ["M40 70l28-2 16 2-22 16-14-4z", "#2b52f0"],
      ["M62 86l-8-16h16z", "#2f7df0"],
    ]}
  />
);
const PyCharm = (
  <JetBrains
    code="PC"
    shapes={[
      ["M6 14L38 0l14 18-32 20z", "#55d68c"],
      ["M6 14l12 4v54l10 8L0 66z", "#48c98a"],
      ["M6 14L18 18v26z", "#8fe47e"],
      ["M64 0l6 20-30 4z", "#a2e866"],
      ["M68 24l17 14-11 18-6-6z", "#56c8e8"],
      ["M24 72l50-34 12 38-26 10z", "#e8f25a"],
      ["M56 70l14-2-10 18z", "#a8ea5c"],
      ["M20 70l16 2-6 14z", "#35b08a"],
    ]}
  />
);
const WebStorm = (
  <JetBrains
    code="WS"
    shapes={[
      ["M0 14L20 0l20 16-18 54-12 4z", "#45b4ea"],
      ["M0 14L20 0l-2 22z", "#6fdcf0"],
      ["M34 18L48 2l10 14z", "#5cd6e6"],
      ["M40 18L56 0h18l4 20-8 10z", "#eaf25c"],
      ["M70 22l8-4 7 18-15 18z", "#3a8df0"],
      ["M68 50l10-4 8 14-16 12z", "#4fb6f2"],
      ["M4 38l12-8v40l-6 4z", "#2f7de0"],
      ["M10 72l6-4h46l-6 18z", "#2f6ff0"],
      ["M10 72l22-4 4 12z", "#4aa0f0"],
    ]}
  />
);

const DOCK: { name: string; icon: ReactNode; open?: boolean; badge?: string }[] = [
  { name: "finder", icon: Finder, open: true },
  { name: "settings", icon: Settings, badge: "1" },
  { name: "safari", icon: Safari, open: true },
  { name: "chrome", icon: Chrome, open: true },
  { name: "discord", icon: Discord },
  { name: "messages", icon: Messages },
  { name: "facetime", icon: FaceTime },
  { name: "mail", icon: Mail },
  { name: "outlook", icon: Outlook },
  { name: "teams", icon: Teams },
  { name: "word", icon: Word, open: true },
  { name: "excel", icon: Excel },
  { name: "powerpoint", icon: PowerPoint },
  { name: "vscode", icon: VsCode },
  { name: "visualstudio", icon: VisualStudio },
  { name: "rider", icon: Rider },
  { name: "pycharm", icon: PyCharm },
  { name: "webstorm", icon: WebStorm },
  { name: "appstore", icon: AppStore },
];

function Dock() {
  return (
    <footer className="absolute top-[1474px] left-[222px] flex h-[116px] w-[2116px] rounded-[36px] border-2 border-[#747c86] bg-[#545d68] pl-[3px] shadow-[0_0_90px_rgba(0,0,0,0.25)]">
      {DOCK.map((d) => (
        <div key={d.name} className="relative flex w-[98px] shrink-0 flex-col items-center pt-[15px]">
          {d.icon}
          {d.open && <i className="mt-[11px] size-2 rounded-full bg-black" />}
          {d.badge && (
            <span className="absolute top-[6px] right-0 flex size-9 items-center justify-center rounded-full bg-[#e15241] text-[21px] text-white">
              {d.badge}
            </span>
          )}
        </div>
      ))}
      <i className="mt-[14px] ml-6 h-[84px] w-[2px] bg-[#2b333d]" />
      <svg className="mt-[6px] ml-[30px] shrink-0" width="80" height="84" viewBox="0 0 80 84">
        <defs>
          <linearGradient id="can" x1="0" x2="1" y1="0" y2="0">
            <stop offset="0" stopColor="#e9ebed" />
            <stop offset="0.500" stopColor="#d3d5d8" />
            <stop offset="1" stopColor="#e6e8ea" />
          </linearGradient>
        </defs>
        <path d="M6 20h10v14H6z" fill="#3d66c4" />
        <path d="M17 1h26l14 16v25H14V7h3z" fill="#f4f4f4" stroke="#dadada" />
        <path d="M0 23h49l8-10 22 32v36a2 2 0 0 1-2 2H2a2 2 0 0 1-2-2z" fill="#f5f5f5" />
        <path d="M57 13v26c0 5 4 7 8 6l14-2z" fill="#fff" stroke="#d2d2d2" />
        <path d="M5 29h13M27 29h15M5 33h45M5 36h48M5 39h45" stroke="#bdbdbd" />
        <text x="40" y="73" textAnchor="middle" fill="#6f6f6f" className="font-[Roboto] text-[10px]">
          CSV
        </text>
      </svg>
      <svg className="mt-[10px] ml-6 shrink-0" width="68" height="86" viewBox="0 0 68 86">
        <path d="M0 10l8 66c1 6 10 8 26 8s25-2 26-8l8-66z" fill="url(#can)" />
        <path d="M7 66l1.500 10c1 5 10 8 25.500 8s24.500-3 25.500-8L61 66c-8 8-46 8-54 0z" fill="#f1f2f3" />
        <ellipse cx="34" cy="10" rx="33" ry="9.500" fill="#b4b7ba" stroke="#f3f4f5" strokeWidth="1.500" />
      </svg>
    </footer>
  );
}

export default function App() {
  return (
    <div className="relative h-[1600px] w-[2560px] overflow-hidden font-[Inter]">
      <Wallpaper />
      <MenuBar />
      <div className="absolute top-[102px] left-[28px] flex h-[1368px] w-[2514px] flex-col overflow-hidden rounded-[20px] bg-white shadow-[0_0_3px_rgba(0,0,0,0.7)]">
        <TabStrip />
        <Toolbar />
        <Bookmarks />
        <PromoBar />
        <CloudHeader />
        <div className="flex min-h-0 flex-1 font-[Roboto]">
          <Sidebar />
          <Main />
        </div>
      </div>
      <Dock />
    </div>
  );
}
